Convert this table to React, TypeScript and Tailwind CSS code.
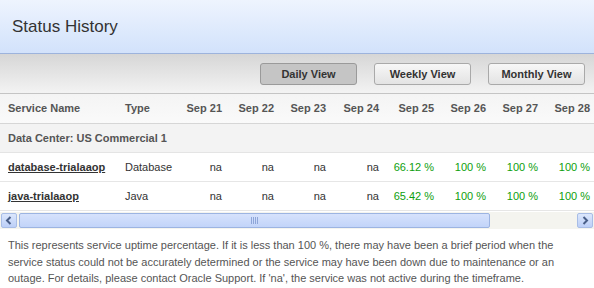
import React from "react";

const dates = ["Sep 21", "Sep 22", "Sep 23", "Sep 24", "Sep 25", "Sep 26", "Sep 27", "Sep 28"];

const rows = [
	{ name: "database-trialaaop", type: "Database", values: ["na", "na", "na", "na", "66.12 %", "100 %", "100 %", "100 %"] },
	{ name: "java-trialaaop", type: "Java", values: ["na", "na", "na", "na", "65.42 %", "100 %", "100 %", "100 %"] },
];

const grid = "grid grid-cols-[117px_53px_60px_52px_52px_53px_55px_52px_52px_52px] w-[598px]";

export default function App() {
	return (
		<div className="w-[594px] h-[288px] bg-white overflow-hidden font-['Liberation_Sans',Arial,sans-serif] text-[11px] text-[#333]">
			{/* Title bar */}
			<div className="h-[54px] bg-gradient-to-b from-[#eef4fe] to-[#d2e2fb] border-b border-[#9db3dc] flex items-center px-3">
				<h1 className="text-[17px] text-[#333] leading-none">Status History</h1>
			</div>

			{/* Toolbar */}
			<div className="h-[40px] bg-gradient-to-b from-[#d6d6d6] to-[#f3f3f3] border-b border-[#c4c4c4] flex items-center justify-end gap-[17px] pr-[9px] pt-[1px]">
				<button className="w-[97px] h-[22px] rounded-[3px] border border-[#9a9a9a] bg-[#c5c5c5] font-bold text-[#333]">
					Daily View
				</button>
				<button className="w-[97px] h-[22px] rounded-[3px] border border-[#a9a9a9] bg-gradient-to-b from-[#f7f7f7] to-[#e3e3e3] font-bold text-[#333]">
					Weekly View
				</button>
				<button className="w-[97px] h-[22px] rounded-[3px] border border-[#a9a9a9] bg-gradient-to-b from-[#f7f7f7] to-[#e3e3e3] font-bold text-[#333]">
					Monthly View
				</button>
			</div>

			{/* Table */}
			<div className="overflow-hidden">
				<div className={`${grid} h-[30px] items-center bg-gradient-to-b from-[#f4f4f4] to-[#fafafa] border-b border-[#d6d6d6] font-bold text-[#555]`}>
					<div className="pl-2">Service Name</div>
					<div className="pl-2">Type</div>
					{dates.map((d) => (
						<div key={d} className="text-right pr-2">{d}</div>
					))}
				</div>
				<div className="h-[29px] flex items-center pl-2 bg-[#f3f3f3] border-b border-[#e4e4e4] font-bold text-[#555]">
					Data Center: US Commercial 1
				</div>
				{rows.map((r) => (
					<div key={r.name} className={`${grid} h-[29px] items-center border-b border-[#e6e6e6]`}>
						<div className="pl-2 font-bold underline text-[#333]">{r.name}</div>
						<div className="pl-2">{r.type}</div>
						{r.values.map((v, i) => (
							<div key={i} className={`text-right pr-2 ${v === "na" ? "text-[#333]" : "text-[#0e9e0e]"}`}>
								{v}
							</div>
						))}
					</div>
				))}
			</div>

			{/* Horizontal scrollbar */}
			<div className="h-[17px] flex items-center bg-[#f4f4ef] px-[1px] mt-[1px]">
				<div className="w-[16px] h-[15px] rounded-[2px] border border-[#a8bde6] bg-gradient-to-b from-[#dce7fc] to-[#bccff7] flex items-center justify-center">
					<svg width="8" height="9" viewBox="0 0 8 9">
						<path d="M5.5 1 L2 4.5 L5.5 8" fill="none" stroke="#4a5f88" strokeWidth="2" />
					</svg>
				</div>
				<div className="ml-[2px] w-[471px] h-[15px] rounded-[2px] border border-[#9cb4e2] bg-gradient-to-b from-[#d6e2fc] to-[#c2d4f9] flex items-center justify-center">
					<svg width="8" height="7" viewBox="0 0 8 7">
						<path d="M0.5 0 V7 M2.5 0 V7 M4.5 0 V7 M6.5 0 V7" stroke="#8ea6d8" strokeWidth="1" />
					</svg>
				</div>
				<div className="flex-1" />
				<div className="w-[16px] h-[15px] rounded-[2px] border border-[#a8bde6] bg-gradient-to-b from-[#dce7fc] to-[#bccff7] flex items-center justify-center">
					<svg width="8" height="9" viewBox="0 0 8 9">
						<path d="M2.5 1 L6 4.5 L2.5 8" fill="none" stroke="#4a5f88" strokeWidth="2" />
					</svg>
				</div>
			</div>

			{/* Footnote */}
			<p className="px-2 pt-[8px] leading-[16.5px] text-[#555] text-[11px]">
				This represents service uptime percentage. If it is less than 100 %, there may have been a brief period when the
				service status could not be accurately determined or the service may have been down due to maintenance or an
				outage. For details, please contact Oracle Support. If 'na', the service was not active during the timeframe.
			</p>
		</div>
	);
}
